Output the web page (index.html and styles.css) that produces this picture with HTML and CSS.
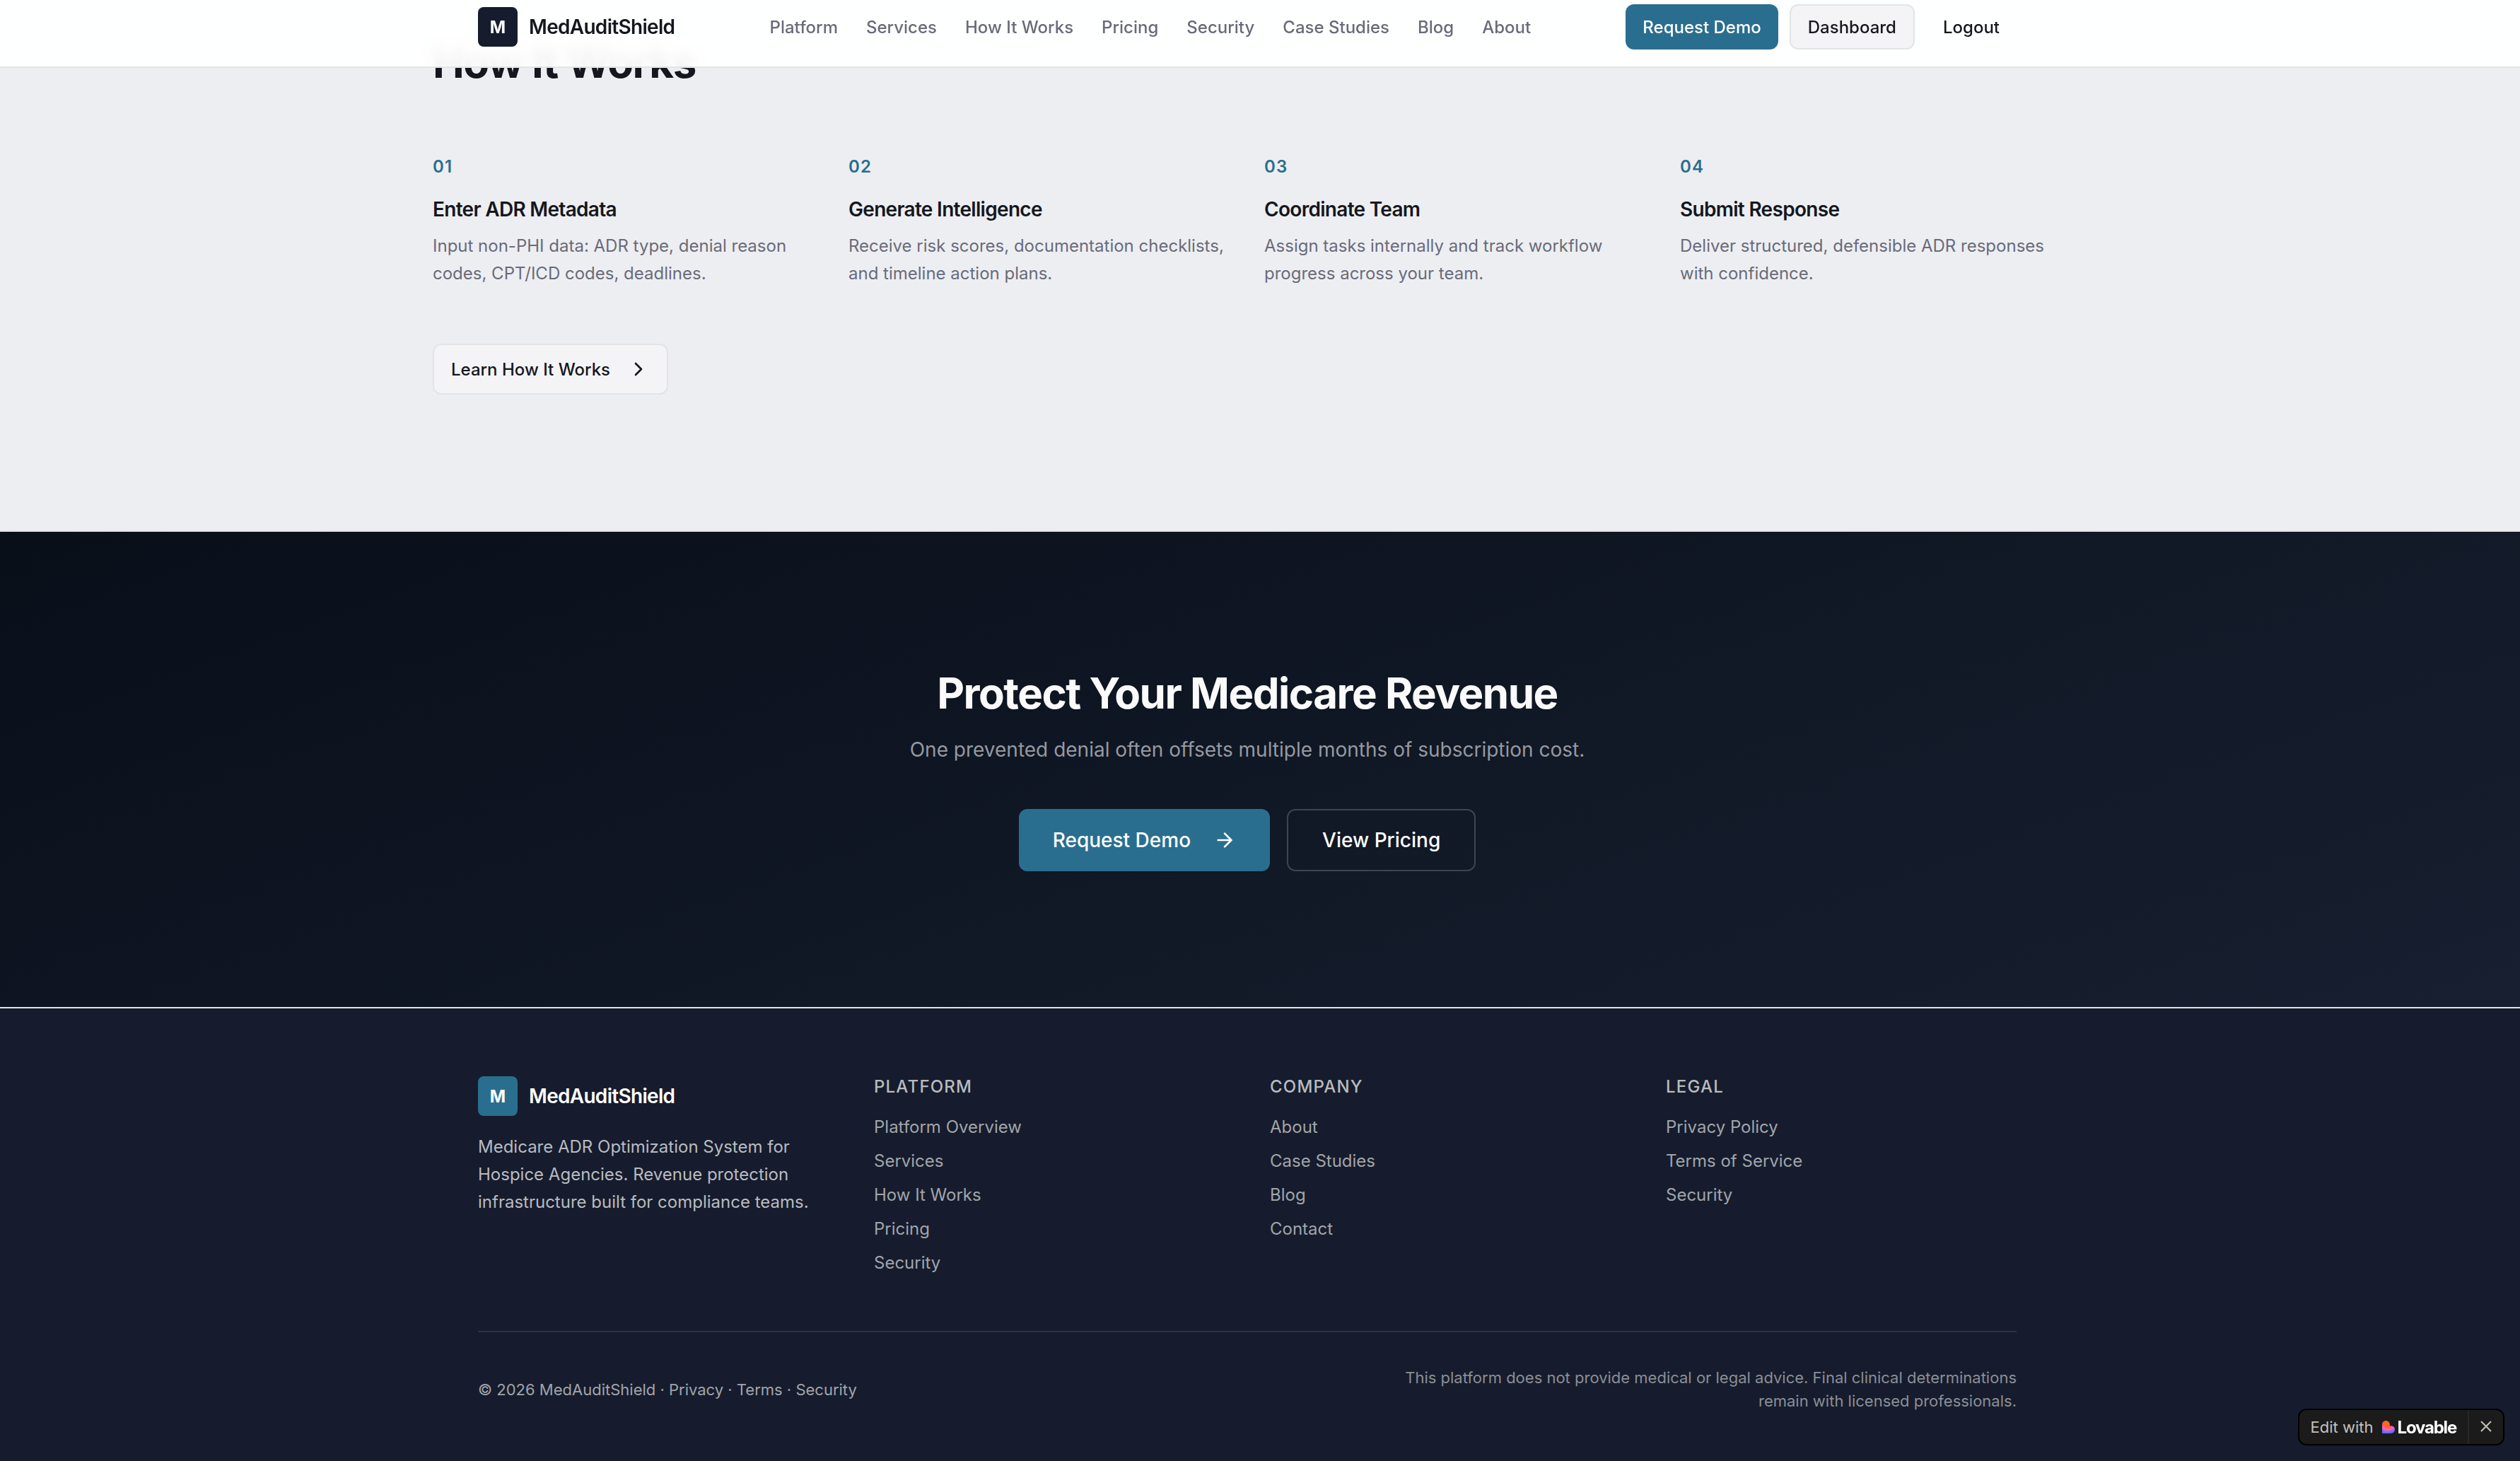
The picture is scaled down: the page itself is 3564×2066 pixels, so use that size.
FILE: index.html
```html
<!DOCTYPE html>
<html lang="en">
<head>
    <meta charset="UTF-8">
    <meta name="viewport" content="width=device-width, initial-scale=1.0">
    <title>MedAuditShield</title>
    <link rel="stylesheet" href="styles.css">
</head>
<body>
    <header class="site-header">
        <div class="container header-inner">
            <a href="#" class="brand">
                <span class="brand-mark">M</span>
                <span class="brand-name">MedAuditShield</span>
            </a>
            <nav class="main-nav">
                <a href="#">Platform</a>
                <a href="#">Services</a>
                <a href="#">How It Works</a>
                <a href="#">Pricing</a>
                <a href="#">Security</a>
                <a href="#">Case Studies</a>
                <a href="#">Blog</a>
                <a href="#">About</a>
            </nav>
            <div class="header-actions">
                <button type="button" class="btn btn-primary">Request Demo</button>
                <button type="button" class="btn btn-outline">Dashboard</button>
                <button type="button" class="btn btn-ghost">Logout</button>
            </div>
        </div>
    </header>

    <main>
        <section class="how">
            <div class="container-wide">
                <h2>How It Works</h2>
                <div class="steps">
                    <div class="step">
                        <div class="step-number">01</div>
                        <h3>Enter ADR Metadata</h3>
                        <p>Input non-PHI data: ADR type, denial reason codes, CPT/ICD codes, deadlines.</p>
                    </div>
                    <div class="step">
                        <div class="step-number">02</div>
                        <h3>Generate Intelligence</h3>
                        <p>Receive risk scores, documentation checklists, and timeline action plans.</p>
                    </div>
                    <div class="step">
                        <div class="step-number">03</div>
                        <h3>Coordinate Team</h3>
                        <p>Assign tasks internally and track workflow progress across your team.</p>
                    </div>
                    <div class="step">
                        <div class="step-number">04</div>
                        <h3>Submit Response</h3>
                        <p>Deliver structured, defensible ADR responses with confidence.</p>
                    </div>
                </div>
                <button type="button" class="btn btn-outline btn-learn">
                    Learn How It Works
                    <svg class="icon" viewBox="0 0 24 24"><path d="m9 18 6-6-6-6"/></svg>
                </button>
            </div>
        </section>

        <section class="cta">
            <h2>Protect Your Medicare Revenue</h2>
            <p>One prevented denial often offsets multiple months of subscription cost.</p>
            <div class="cta-actions">
                <button type="button" class="btn btn-lg btn-primary">
                    Request Demo
                    <svg class="icon" viewBox="0 0 24 24"><path d="M5 12h14"/><path d="m12 5 7 7-7 7"/></svg>
                </button>
                <button type="button" class="btn btn-lg btn-dark">View Pricing</button>
            </div>
        </section>
    </main>

    <footer class="site-footer">
        <div class="container">
            <div class="footer-grid">
                <div>
                    <a href="#" class="brand">
                        <span class="brand-mark">M</span>
                        <span class="brand-name">MedAuditShield</span>
                    </a>
                    <p class="footer-about">Medicare ADR Optimization System for Hospice Agencies. Revenue protection infrastructure built for compliance teams.</p>
                </div>
                <div>
                    <h4>Platform</h4>
                    <ul>
                        <li><a href="#">Platform Overview</a></li>
                        <li><a href="#">Services</a></li>
                        <li><a href="#">How It Works</a></li>
                        <li><a href="#">Pricing</a></li>
                        <li><a href="#">Security</a></li>
                    </ul>
                </div>
                <div>
                    <h4>Company</h4>
                    <ul>
                        <li><a href="#">About</a></li>
                        <li><a href="#">Case Studies</a></li>
                        <li><a href="#">Blog</a></li>
                        <li><a href="#">Contact</a></li>
                    </ul>
                </div>
                <div>
                    <h4>Legal</h4>
                    <ul>
                        <li><a href="#">Privacy Policy</a></li>
                        <li><a href="#">Terms of Service</a></li>
                        <li><a href="#">Security</a></li>
                    </ul>
                </div>
            </div>
            <div class="footer-bottom">
                <p>© 2026 MedAuditShield · <a href="#">Privacy</a> · <a href="#">Terms</a> · <a href="#">Security</a></p>
                <p class="disclaimer">This platform does not provide medical or legal advice. Final clinical determinations remain with licensed professionals.</p>
            </div>
        </div>
    </footer>

    <div class="edit-badge">
        <a href="#">
            <span>Edit with</span>
            <svg class="heart" viewBox="0 0 18 18">
                <defs>
                    <radialGradient id="heartFill" cx="8" cy="2" r="17" gradientUnits="userSpaceOnUse">
                        <stop offset="0.2" stop-color="#ff6a13"/>
                        <stop offset="0.4" stop-color="#ff5a3c"/>
                        <stop offset="0.62" stop-color="#ff63c0"/>
                        <stop offset="0.9" stop-color="#5a6bff"/>
                    </radialGradient>
                </defs>
                <path fill="url(#heartFill)" d="M5.400 0C8.400 0 10.800 2.400 10.800 5.400V7.200H12.600C15.600 7.200 18 9.600 18 12.600S15.600 18 12.600 18H0V5.400C0 2.400 2.400 0 5.400 0Z"/>
            </svg>
            <strong>Lovable</strong>
        </a>
        <button type="button" aria-label="Close">
            <svg viewBox="0 0 16 16"><path d="M1 1l14 14M15 1L1 15"/></svg>
        </button>
    </div>
</body>
</html>
```

FILE: styles.css
```css
* {
    box-sizing: border-box;
}
html {
    background-color: #161c2d;
}
body {
    margin: 0;
    font-family: Inter, "Liberation Sans", sans-serif;
    font-size: 24px;
    line-height: 39px;
    color: #15171e;
    -webkit-font-smoothing: antialiased;
}
h2, h3, h4, p, ul {
    margin: 0;
    padding: 0;
}
ul {
    list-style: none;
}
a {
    color: inherit;
    text-decoration: none;
}
.container {
    max-width: 2176px;
    margin: 0 auto;
}
.container-wide {
    max-width: 2304px;
    margin: 0 auto;
}

/* scrollbar gutter */
.site-header, .how, .cta, .site-footer {
    padding-right: 36px;
}

/* buttons */
.btn {
    display: inline-flex;
    align-items: center;
    justify-content: center;
    height: 64px;
    padding: 0 24px;
    border: none;
    border-radius: 12px;
    font-family: inherit;
    font-size: 24px;
    font-weight: 500;
    color: #15171e;
    background: none;
    white-space: nowrap;
    cursor: pointer;
}
.btn-primary {
    background-color: #2a6e8f;
    color: #fff;
}
.btn-outline {
    background-color: #f4f4f7;
    border: 2px solid #e2e4e7;
}
.btn-learn {
    height: 72px;
    gap: 24px;
}
.btn-lg {
    height: 88px;
    padding: 0 48px;
    gap: 32px;
    font-size: 28px;
}
.btn-dark {
    color: #fff;
    border: 2px solid #3d4452;
}
.icon {
    width: 32px;
    height: 32px;
    fill: none;
    stroke: currentColor;
    stroke-width: 2;
    stroke-linecap: round;
    stroke-linejoin: round;
}

/* brand */
.brand {
    display: flex;
    align-items: center;
    gap: 16px;
}
.brand-mark {
    display: flex;
    align-items: center;
    justify-content: center;
    width: 56px;
    height: 56px;
    border-radius: 8px;
    background-color: #161c2d;
    color: #fff;
    font-weight: 700;
}
.brand-name {
    font-size: 28px;
    font-weight: 600;
    letter-spacing: -0.025em;
}

/* header */
.site-header {
    position: fixed;
    top: 0;
    left: 0;
    right: 0;
    z-index: 10;
    padding-top: 6px;
    padding-bottom: 24px;
    background-color: rgba(255, 255, 255, 0.95);
    backdrop-filter: blur(8px);
    border-bottom: 2px solid #e2e4e7;
}
.header-inner {
    display: flex;
    align-items: center;
    justify-content: space-between;
}
.main-nav {
    display: flex;
    gap: 40px;
    font-weight: 500;
    color: #696b7b;
}
.header-actions {
    display: flex;
    gap: 16px;
}

/* how it works */
.how {
    padding-top: 52px;
    padding-bottom: 192px;
    background-color: #edeef1;
    border-bottom: 2px solid #e2e4e7;
}
h2 {
    font-size: 60px;
    line-height: 72px;
    font-weight: 700;
    letter-spacing: -0.025em;
}
.steps {
    display: grid;
    grid-template-columns: repeat(4, 1fr);
    gap: 48px;
    margin-top: 96px;
    margin-bottom: 80px;
}
.step-number {
    line-height: 32px;
    margin-bottom: 24px;
    font-weight: 600;
    letter-spacing: 0.05em;
    color: #2a6e8f;
}
.step h3 {
    margin-bottom: 12px;
    font-size: 28px;
    line-height: 40px;
    font-weight: 600;
    letter-spacing: -0.025em;
}
.step p {
    color: #696b7b;
}

/* call to action */
.cta {
    padding-top: 192px;
    padding-bottom: 192px;
    background: linear-gradient(160deg, #090f19, #171f30);
    text-align: center;
}
.cta h2 {
    color: #fafafb;
}
.cta p {
    margin: 24px 0 64px;
    font-size: 28px;
    line-height: 40px;
    color: #9599a1;
}
.cta-actions {
    display: flex;
    justify-content: center;
    gap: 24px;
}

/* footer */
.site-footer {
    padding-top: 96px;
    padding-bottom: 64px;
    background-color: #161c2d;
    border-top: 2px solid #e2e4e7;
    color: #a2a4ab;
}
.site-footer .brand {
    color: #fff;
}
.site-footer .brand-mark {
    background-color: #2a6e8f;
}
.footer-grid {
    display: grid;
    grid-template-columns: repeat(4, 1fr);
    gap: 64px;
    margin-bottom: 78px;
}
.footer-about {
    margin-top: 24px;
    color: #b9bbc0;
}
.footer-grid h4 {
    margin-bottom: 24px;
    font-size: 24px;
    line-height: 30px;
    font-weight: 500;
    letter-spacing: 0.05em;
    text-transform: uppercase;
    color: #b9bbc0;
}
.footer-grid ul {
    display: grid;
    gap: 12px;
    line-height: 36px;
}
.footer-bottom {
    display: flex;
    align-items: center;
    justify-content: space-between;
    padding-top: 48px;
    border-top: 2px solid #2d3342;
    font-size: 22px;
    line-height: 33px;
}
.disclaimer {
    max-width: 896px;
    text-align: right;
    color: #8b8e96;
}

/* floating badge */
.edit-badge {
    position: fixed;
    right: 22px;
    bottom: 22px;
    z-index: 20;
    display: flex;
    height: 52px;
    border: 2px solid #000;
    border-radius: 12px;
    background-color: #1b1b1b;
    font-size: 22px;
    color: #c5c1ba;
}
.edit-badge a {
    display: flex;
    align-items: center;
    padding: 0 16px;
}
.edit-badge strong {
    font-size: 24px;
    letter-spacing: -0.05em;
    color: #fff;
}
.edit-badge .heart {
    width: 18px;
    height: 18px;
    margin: 0 4px 0 12px;
}
.edit-badge button {
    width: 50px;
    padding: 0;
    border: none;
    border-left: 2px solid #272727;
    background: none;
    color: inherit;
}
.edit-badge button svg {
    width: 16px;
    height: 16px;
    stroke: currentColor;
    stroke-width: 2;
}
```
